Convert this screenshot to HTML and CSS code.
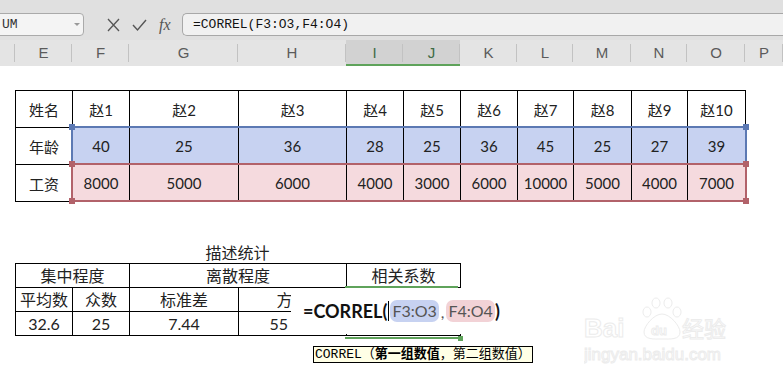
FILE: index.html
```html
<!DOCTYPE html>
<html lang="zh-CN">
<head>
<meta charset="UTF-8">
<title>CORREL</title>
<link rel="stylesheet" href="styles.css">
</head>
<body>

<div class="toolbar">
    <div class="namebox">UM<span class="drop"></span></div>
    <div class="fbtns">
        <svg width="13" height="14" viewBox="0 0 13 14"><path d="M1 1 L12 13 M12 1 L1 13" stroke="#555" stroke-width="1.3" fill="none"/></svg>
        <svg width="15" height="14" viewBox="0 0 15 14"><path d="M1 7 L5.5 12 L14 2" stroke="#555" stroke-width="1.4" fill="none"/></svg>
        <span class="fx">fx</span>
    </div>
    <div class="fbox">=CORREL(F3:O3,F4:O4)</div>
</div>

<div class="colheads">
    <div class="ch"></div>
    <div class="ch">E</div>
    <div class="ch">F</div>
    <div class="ch">G</div>
    <div class="ch">H</div>
    <div class="ch sel">I</div>
    <div class="ch sel">J</div>
    <div class="ch">K</div>
    <div class="ch">L</div>
    <div class="ch">M</div>
    <div class="ch">N</div>
    <div class="ch">O</div>
    <div class="ch">P</div>
</div>

<div class="sheet">
    <div class="hl-wrap">
        <table class="data">
            <colgroup>
                <col style="width:57px"><col style="width:57px"><col style="width:109px"><col style="width:108px">
                <col style="width:57px"><col style="width:57px"><col style="width:57px"><col style="width:56px">
                <col style="width:58px"><col style="width:56px"><col style="width:58px">
            </colgroup>
            <tr>
                <td>姓名</td><td>赵1</td><td>赵2</td><td>赵3</td><td>赵4</td><td>赵5</td>
                <td>赵6</td><td>赵7</td><td>赵8</td><td>赵9</td><td>赵10</td>
            </tr>
            <tr class="age">
                <td>年龄</td><td>40</td><td>25</td><td>36</td><td>28</td><td>25</td>
                <td>36</td><td>45</td><td>25</td><td>27</td><td>39</td>
            </tr>
            <tr class="pay">
                <td>工资</td><td>8000</td><td>5000</td><td>6000</td><td>4000</td><td>3000</td>
                <td>6000</td><td>10000</td><td>5000</td><td>4000</td><td>7000</td>
            </tr>
        </table>
        <div class="range blue"><i class="h tl"></i><i class="h tr"></i></div>
        <div class="range red"><i class="h tl"></i><i class="h tr"></i><i class="h bl"></i><i class="h br"></i></div>
    </div>

    <div class="caption">描述统计</div>

    <div class="stats-wrap">
        <table class="stats">
            <colgroup>
                <col style="width:57px"><col style="width:57px"><col style="width:109px"><col style="width:108px"><col style="width:114px">
            </colgroup>
            <tr>
                <td colspan="2">集中程度</td>
                <td colspan="2">离散程度</td>
                <td>相关系数</td>
            </tr>
            <tr>
                <td>平均数</td><td>众数</td><td>标准差</td><td>方差</td><td rowspan="2"></td>
            </tr>
            <tr>
                <td>32.6</td><td>25</td><td>7.44</td><td class="right">55</td>
            </tr>
        </table>

        <div class="editor">
            <span class="fn">=CORREL(</span><span class="caret"></span><span class="ref r1">F3:O3</span><span class="comma">,</span><span class="ref r2">F4:O4</span><span class="fn">)</span>
        </div>
        <div class="cellsel"><i class="grip"></i></div>
        <div class="tip">CORREL（<b>第一组数值</b>，第二组数值）</div>
    </div>

    <svg class="wm" width="150" height="72" viewBox="0 0 150 72">
        <g fill="#fff" stroke="#ececec" stroke-width="1">
            <text x="0" y="43" font-family="Liberation Sans" font-weight="bold" font-size="26">Bai</text>
            <ellipse cx="63" cy="18" rx="4" ry="5"/>
            <ellipse cx="72" cy="9" rx="4" ry="5"/>
            <ellipse cx="84" cy="9" rx="4" ry="5"/>
            <ellipse cx="93" cy="18" rx="4" ry="5"/>
            <path d="M78 20 C70 20 60 32 60 38 C60 46 70 45 78 45 C86 45 96 46 96 38 C96 32 86 20 78 20 Z"/>
            <text x="67" y="41" font-family="Liberation Sans" font-weight="bold" font-size="13">du</text>
            <text x="98" y="43" font-family="Noto Sans CJK SC" font-size="22">经验</text>
            <text x="0" y="66" font-family="Liberation Sans" font-size="17">jingyan.baidu.com</text>
        </g>
    </svg>
</div>

</body>
</html>
```

FILE: styles.css
```css
body { margin: 0; width: 783px; height: 378px; overflow: hidden; background: #fff; font-family: "Lato", "Noto Sans CJK SC", sans-serif; }

.toolbar { height: 40px; box-sizing: border-box; padding-top: 13px; background: #e0e0e0; display: flex; align-items: flex-start; }
.namebox { width: 92px; height: 23px; margin-left: -8px; box-sizing: border-box; border: 1px solid #aaa; border-radius: 4px; background: #f4f4f4;
    font: 13px/21px "Liberation Mono", monospace; color: #333; display: flex; justify-content: space-between; align-items: center; padding: 0 3px 0 9px; }
.drop { width: 0; height: 0; border-left: 3px solid transparent; border-right: 3px solid transparent; border-top: 3px solid #999; }
.fbtns { width: 98px; height: 23px; display: flex; align-items: center; gap: 12px; padding-left: 23px; box-sizing: border-box; }
.fx { font: italic 16px "Liberation Serif", serif; color: #555; margin-left: 0; }
.fbox { flex: 1; height: 23px; box-sizing: border-box; border: 1px solid #a8a8a8; border-right: none; border-radius: 5px 0 0 5px; background: #f1f1f1;
    font: 13px/21px "Liberation Mono", monospace; color: #111; padding-left: 10px; }

.colheads { display: grid; grid-template-columns: 15px 57px 57px 109px 108px 57px 57px 57px 56px 58px 56px 58px 38px; height: 26px; background: #e4e4e4; }
.ch { font: 15px/26px "Liberation Sans", sans-serif; color: #5b5b5b; text-align: center;
    background: linear-gradient(#c2c2c2, #c2c2c2) right center / 1px 18px no-repeat; }
.ch.sel { background-color: #d2d2d2; color: #3f6b45; box-shadow: inset 0 -2px 0 #5fa35b; }

.sheet { position: relative; padding: 24px 0 0 15px; }

.hl-wrap { position: relative; width: 731px; }
.data { border-collapse: collapse; table-layout: fixed; width: 731px; }
.data td { border: 1px solid #000; height: 36px; padding: 0; text-align: center; font-size: 15px; color: #222; }
.age td + td { background: #c7d2f1; }
.pay td + td { background: #f5dade; }

.range { position: absolute; left: 56px; width: 676px; height: 39px; box-sizing: border-box; border: 2px solid; }
.range.blue { top: 36px; border-color: #5c79b3; }
.range.red { top: 73px; border-color: #b2626a; }
.h { position: absolute; width: 6px; height: 6px; }
.blue .h { background: #5c79b3; }
.red .h { background: #b2626a; }
.h.tl { left: -4px; top: -4px; }
.h.tr { right: -4px; top: -4px; }
.h.bl { left: -4px; bottom: -4px; }
.h.br { right: -4px; bottom: -4px; }

.caption { width: 217px; margin-left: 114px; padding-top: 41px; height: 20px; line-height: 20px; text-align: center; font-size: 16px; color: #222; }

.stats-wrap { position: relative; width: 446px; }
.stats { border-collapse: collapse; table-layout: fixed; width: 446px; }
.stats td { border: 1px solid #000; height: 23px; padding: 0; text-align: center; font-size: 16px; color: #222; line-height: 20px; }
.stats td.right { text-align: right; padding-right: 58px; }

.editor { position: absolute; left: 276px; top: 25px; width: 214px; height: 46px; background: #fff; display: flex; align-items: center; padding-left: 12px; box-sizing: border-box; }
.fn { font-weight: bold; font-size: 18px; color: #111; }
.caret { width: 1px; height: 20px; background: #000; margin: 0 1px; }
.ref { font-size: 16px; color: #555; border-radius: 7px; padding: 1px 2px; line-height: 20px; }
.r1 { background: #c7d2f1; }
.r2 { background: #f2d2d6; }
.comma { font-size: 16px; color: #555; padding: 0 2px; }

.cellsel { position: absolute; left: 330px; top: 23px; width: 113px; height: 49px; border-top: 2px solid #5fa35b; border-bottom: 2px solid #5fa35b; }
.grip { position: absolute; right: -5px; bottom: -4px; width: 5px; height: 5px; background: #5fa35b; }

.tip { position: absolute; left: 298px; top: 83px; height: 17px; box-sizing: border-box; border: 1px solid #000; background: #ffffe6; padding: 0 1px;
    font: 13px/15px "Liberation Mono", "Noto Sans CJK SC", monospace; color: #000; white-space: nowrap; }

.wm { position: absolute; left: 584px; top: 228px; }
```
